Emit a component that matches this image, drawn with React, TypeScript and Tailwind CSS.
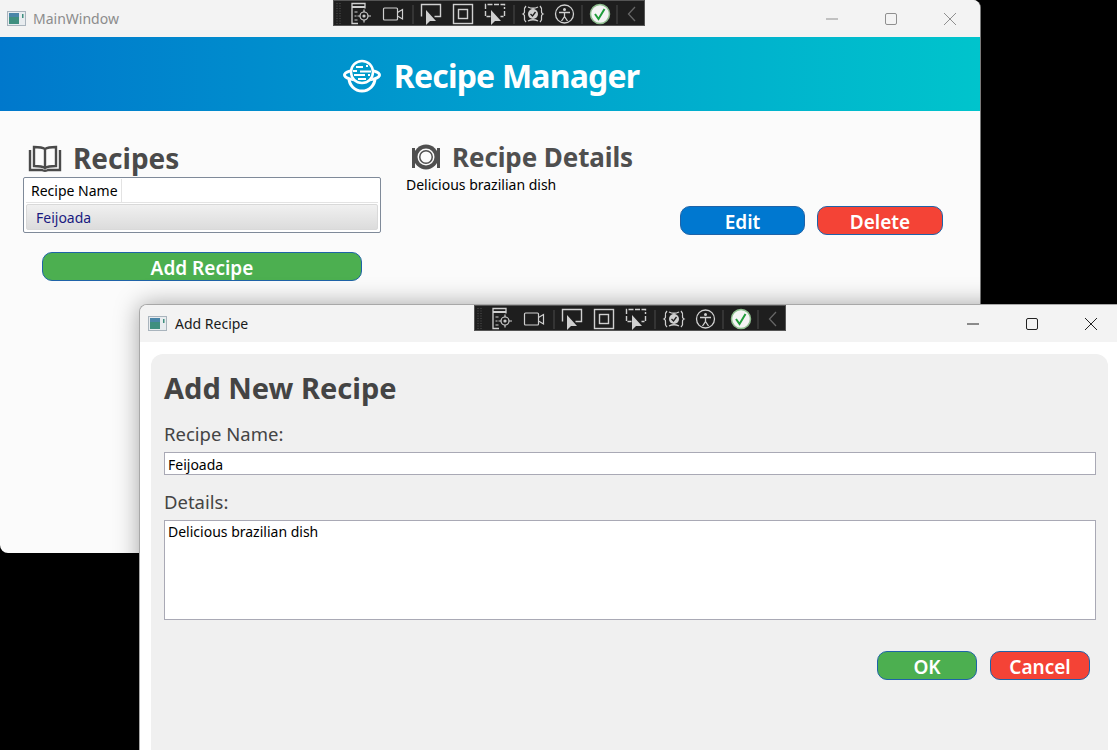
import React from "react";

const FONT = "font-['Noto_Sans','Open_Sans',sans-serif]";

function AppIcon() {
  return (
    <svg width="20" height="16" viewBox="0 0 20 16" className="shrink-0">
      <rect x="0.5" y="0.5" width="18" height="14" fill="#e8ecef" stroke="#a9b4bd" />
      <rect x="2" y="2" width="10" height="11" fill="#3f8f7f" />
      <rect x="2" y="2" width="10" height="4" fill="#4a86a8" />
      <rect x="15" y="3" width="1.5" height="4" fill="#3f8f7f" />
    </svg>
  );
}

function Toolbar({ className }: { className: string }) {
  const s = "#d0d0d0";
  return (
    <div className={`absolute h-[26px] w-[312px] bg-[#1e1e1e] border border-[#555555] ${className}`}>
      <svg width="310" height="24" viewBox="0 0 310 24" fill="none" stroke={s} strokeWidth="1.2" className="block">
        <g stroke="#555" strokeDasharray="1 1.5" strokeWidth="1">
          <path d="M3 2v21M6 2v21" />
        </g>
        {/* live visual tree */}
        <path d="M24 22.500H18V2.500h13v5" strokeWidth="1.300" />
        <path d="M18 6h13" strokeWidth="2" />
        <path d="M20.500 11h3M20.500 15h2M20.500 19h3" />
        <circle cx="30" cy="15" r="4" />
        <circle cx="30" cy="15" r="1" fill={s} />
        <path d="M30 8.500v2.500M30 19v2.500M23.500 15h2.500M34 15h3" />
        {/* camera */}
        <rect x="49.500" y="7" width="14" height="12" rx="1" />
        <path d="M63.500 11.500l5-3v9.500l-5-3" />
        <path d="M79 4v19" stroke="#444" />
        {/* select */}
        <path d="M87.500 15.500V3.500h19v12h-6" strokeWidth="1.400" />
        <path d="M92 9v15l4-4h6z" fill={s} stroke="none" />
        {/* square */}
        <rect x="119.500" y="3.500" width="19" height="19" strokeWidth="1.400" />
        <rect x="124.500" y="8.500" width="9" height="9" strokeWidth="1.400" />
        {/* display layout */}
        <path d="M151.500 8V3.500h19V8M151.500 10v5.500h5M170.500 10v5.500h-4" strokeWidth="1.400" strokeDasharray="5 1.500" />
        <path d="M157 9v15l4-4h6z" fill={s} stroke="none" />
        <path d="M180 4v19" stroke="#444" />
        {/* hot reload */}
        <path d="M192 5c-2 2-2 3-1.500 5 .5 2-.5 2.500-1.500 3 1 .5 2 1 1.500 3-.5 2-.5 3 1.500 5M206 5c2 2 2 3 1.500 5-.5 2 .5 2.500 1.500 3-1 .5-2 1-1.500 3 .5 2 .5 3-1.500 5" strokeWidth="1.300" />
        <path d="M194 6c3 1.500 7 1.500 10 0M194 20c3-1.500 7-1.500 10 0" strokeWidth="1.300" />
        <circle cx="199" cy="13" r="5" fill={s} stroke="none" />
        <path d="M196.500 13l2 2 3-4" stroke="#1e1e1e" strokeWidth="1.300" />
        {/* accessibility */}
        <circle cx="230.500" cy="13" r="9" strokeWidth="1.300" />
        <circle cx="230.500" cy="8.500" r="1.500" fill={s} stroke="none" />
        <path d="M225 11.500h11M230.500 11.500v4l-3 4.500M230.500 15.500l3 4.500" strokeWidth="1.300" />
        <path d="M248 4v19" stroke="#444" />
        {/* check */}
        <circle cx="266" cy="13" r="9.500" fill="#f4f4f4" stroke="#8fbf8f" strokeWidth="1.500" />
        <path d="M261 13l3.500 5 6-10" stroke="#1f9d3a" strokeWidth="2" />
        <path d="M283 4v19" stroke="#444" />
        <path d="M301 6l-6.500 7 6.500 7" stroke="#666" strokeWidth="1.300" />
      </svg>
    </div>
  );
}

function WinButtons({ dim }: { dim?: boolean }) {
  const c = dim ? "#8f8f8f" : "#222222";
  return (
    <div className="flex items-center">
      <svg width="12" height="2" className="mr-[47px]"><path d="M0 1h12" stroke={c} /></svg>
      <svg width="12" height="12" className="mr-[46px]"><rect x="0.500" y="0.500" width="11" height="11" rx="1.500" fill="none" stroke={c} /></svg>
      <svg width="14" height="14"><path d="M1 1l12 12M13 1L1 13" stroke={c} /></svg>
    </div>
  );
}

function Pill({ label, color, className }: { label: string; color: string; className: string }) {
  return (
    <div className={`flex items-center justify-center rounded-[10px] border border-[#1f63a8] text-white text-[19px] font-semibold leading-none ${color} ${className}`}>
      <span className="pt-[3px]">{label}</span>
    </div>
  );
}

function Logo() {
  return (
    <svg width="40" height="36" viewBox="0 0 40 36" fill="none" className="shrink-0">
      <path d="M7 20a13 13 0 0 0 26 0" stroke="#fff" strokeWidth="3" />
      <ellipse cx="20" cy="17" rx="17.500" ry="5.500" stroke="#fff" strokeWidth="3" />
      <circle cx="20" cy="14" r="12" fill="#009ccb" />
      <circle cx="20" cy="14" r="11" stroke="#fff" strokeWidth="2.500" />
      <path d="M14 9h7M24 8h2M11 13h4M18 13.500h11M12 17h11M26 17h2M16 21h8" stroke="#fff" strokeWidth="2" />
    </svg>
  );
}

function BookIcon() {
  return (
    <svg width="34" height="28" viewBox="0 0 34 28" fill="none" stroke="#4a4a4a" strokeWidth="2.400" className="shrink-0">
      <path d="M17 4c-3-2-7-2-11-2v19c4 0 8 0 11 2 3-2 7-2 11-2V2c-4 0-8 0-11 2zM17 4v19" />
      <path d="M2 5v20h12c1 1 5 1 6 0h12V5" />
    </svg>
  );
}

function PlateIcon() {
  return (
    <svg width="30" height="26" viewBox="0 0 30 26" fill="none" className="shrink-0">
      <path d="M1 4h3v20H1zM26 4h3v20h-3z" fill="#4f4f4f" />
      <circle cx="15" cy="13" r="12.500" fill="#4f4f4f" />
      <circle cx="15" cy="13" r="8.500" fill="#fbfbfb" />
      <circle cx="15" cy="13" r="7" fill="#4f4f4f" />
      <circle cx="15" cy="13" r="5.500" fill="#fbfbfb" />
    </svg>
  );
}

export default function App() {
  return (
    <div className={`relative h-[750px] w-[1117px] overflow-hidden bg-black ${FONT}`}>
      {/* Main window */}
      <div className="absolute left-0 top-0 flex h-[553px] w-[981px] flex-col overflow-hidden rounded-b-lg rounded-tr-lg border-r border-[#7a7a7a] bg-[#fbfbfb]">
        <div className="flex h-[37px] shrink-0 items-center justify-between bg-[#f3f3f3] pl-[7px] pr-[23px]">
          <div className="flex items-center gap-[6px] text-[14px] text-[#8c8c8c]">
            <AppIcon />
            <span>MainWindow</span>
          </div>
          <WinButtons dim />
        </div>
        <div className="flex h-[74px] shrink-0 items-center justify-center gap-[12px] bg-gradient-to-r from-[#0078cc] to-[#00c4cc] pl-[1px] pt-[3px]">
          <Logo />
          <span className="text-[32px] font-bold leading-none tracking-[-0.800px] text-white">Recipe Manager</span>
        </div>
        <div className="flex flex-1 pl-[23px] pt-[30px]">
          <div className="flex w-[358px] flex-col">
            <div className="flex h-[36px] items-center gap-[11px] pl-[5px]">
              <BookIcon />
              <span className="-mt-[2px] text-[28px] font-bold leading-none text-[#4a4a4a]">Recipes</span>
            </div>
            <div className="flex h-[56px] flex-col rounded-[2px] border border-[#7f8a99] bg-white px-[2px] pt-[1px]">
              <div className="flex h-[24px] border-b border-[#e3e3e3] pl-[5px] text-[14px] leading-[24px] text-black">
                <span className="border-r border-[#e3e3e3] pr-[3px]">Recipe Name</span>
              </div>
              <div className="mt-[1px] flex h-[26px] items-center rounded-[2px] border border-[#d9d9d9] bg-gradient-to-b from-[#f0f0f0] to-[#dcdcdc] pl-[9px] text-[14px] text-[#1a1a80]">
                Feijoada
              </div>
            </div>
            <Pill label="Add Recipe" color="bg-[#4caf50]" className="ml-[19px] mt-[19px] h-[29px] w-[320px]" />
          </div>
          <div className="ml-[25px] flex flex-col">
            <div className="-mt-[1px] flex h-[34px] items-center gap-[11px] pl-[5px]">
              <PlateIcon />
              <span className="text-[26px] font-bold leading-none tracking-[-0.100px] text-[#4f4f4f]">Recipe Details</span>
            </div>
            <div className="mt-[1px] text-[14px] leading-[20px] text-black">Delicious brazilian dish</div>
            <div className="ml-[274px] mt-[11px] flex gap-[12px]">
              <Pill label="Edit" color="bg-[#0078d0]" className="h-[29px] w-[125px]" />
              <Pill label="Delete" color="bg-[#f44336]" className="h-[29px] w-[126px]" />
            </div>
          </div>
        </div>
      </div>
      <Toolbar className="left-[333px] top-0" />

      {/* Dialog */}
      <div className="absolute left-[139px] top-[304px] flex h-[470px] w-[1000px] flex-col overflow-hidden rounded-tl-lg border-l border-t border-[#a8a8a8] bg-white shadow-[0_0_24px_rgba(0,0,0,0.35)]">
        <div className="flex h-[37px] shrink-0 items-center justify-between bg-[#f3f3f3] pl-[8px]">
          <div className="flex items-center gap-[7px] text-[14px] text-[#1a1a1a]">
            <AppIcon />
            <span>Add Recipe</span>
          </div>
          <div className="pr-[41px]">
            <WinButtons />
          </div>
        </div>
        <div className="flex-1 pl-[11px] pt-[12px]">
          <div className="h-full w-[957px] rounded-t-[12px] bg-[#f0f0f0] px-[13px] pt-[15px]">
            <div className="text-[29px] font-bold leading-[38px] text-[#444444]">Add New Recipe</div>
            <div className="mt-[15px] text-[18.500px] leading-[24px] text-[#444444]">Recipe Name:</div>
            <div className="mt-[6px] h-[23px] w-[932px] border border-[#a9a9b5] bg-white pl-[3px] text-[14px] leading-[23px] text-black">Feijoada</div>
            <div className="mt-[15px] text-[18.500px] leading-[24px] text-[#444444]">Details:</div>
            <div className="mt-[6px] h-[100px] w-[932px] border border-[#a9a9b5] bg-white pl-[3px] text-[14px] leading-[22px] text-black">Delicious brazilian dish</div>
            <div className="ml-[713px] mt-[31px] flex gap-[13px]">
              <Pill label="OK" color="bg-[#4caf50]" className="h-[29px] w-[100px]" />
              <Pill label="Cancel" color="bg-[#f44336]" className="h-[29px] w-[100px]" />
            </div>
          </div>
        </div>
      </div>
      <Toolbar className="left-[474px] top-[305px]" />
    </div>
  );
}
